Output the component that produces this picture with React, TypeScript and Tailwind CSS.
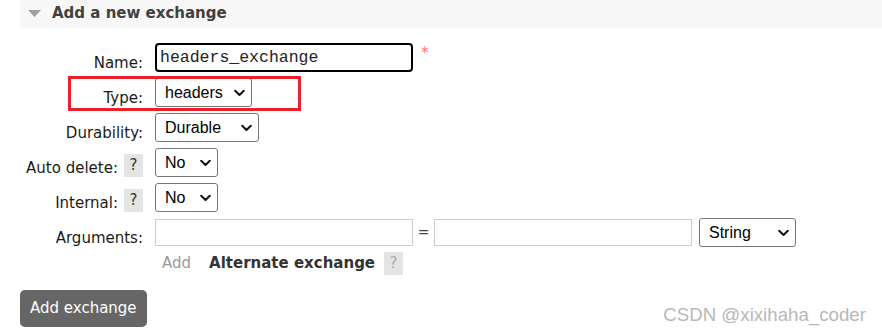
import React from "react";

const verdana = { fontFamily: '"DejaVu Sans", Verdana, sans-serif' };

function Chevron() {
  return (
    <svg width="11" height="7" viewBox="0 0 11 7" className="pointer-events-none absolute right-[7px] top-1/2 -translate-y-1/2">
      <path d="M1.2 1.2 5.5 5.5 9.8 1.2" fill="none" stroke="#111" strokeWidth="2" strokeLinecap="round" strokeLinejoin="round" />
    </svg>
  );
}

function Select({ value, options, width }: { value: string; options: string[]; width: string }) {
  return (
    <div className={`relative h-[29px] ${width}`}>
      <select
        defaultValue={value}
        className="h-full w-full appearance-none rounded-[3px] border border-[#767676] bg-white pl-[9px] text-[16px] text-black outline-none"
        style={{ fontFamily: '"Liberation Sans", Arial, sans-serif' }}
      >
        {options.map((o) => (
          <option key={o}>{o}</option>
        ))}
      </select>
      <Chevron />
    </div>
  );
}

function Help({ light }: { light?: boolean }) {
  return (
    <span
      className={`ml-[6px] inline-flex h-[23px] w-[19px] items-center justify-center bg-[#e4e4e4] text-[15px] leading-none ${
        light ? "text-[#aaa]" : "text-[#333]"
      }`}
    >
      ?
    </span>
  );
}

function Row({ label, help, children }: { label: string; help?: boolean; children: React.ReactNode }) {
  return (
    <div className="flex h-[35px] items-start">
      <div className="flex h-[29px] w-[123px] items-end justify-end">
        <span className="text-[15px] leading-[18px] text-[#1a1a1a]">{label}</span>
        {help && <Help />}
      </div>
      <div className="ml-[12px] flex items-center">{children}</div>
    </div>
  );
}

export default function App() {
  return (
    <div className="relative h-[333px] w-[882px] overflow-hidden bg-white" style={verdana}>
      <div className="pl-[20px]">
        {/* section header */}
        <div className="flex h-[28px] items-center bg-[#f7f7f7] pb-[2px]">
          <svg width="13" height="7" viewBox="0 0 13 7" className="ml-[8px]">
            <path d="M0 0h13L6.5 7z" fill="#a0a0a0" />
          </svg>
          <h2 className="ml-[11px] text-[15px] font-bold text-[#404040]">Add a new exchange</h2>
        </div>

        <div className="mt-[15px] flex flex-col">
          <Row label="Name:">
            <input
              defaultValue="headers_exchange"
              className="h-[29px] w-[258px] rounded-[4px] border-2 border-black px-[3px] text-[16.5px] text-[#222] outline-none"
              style={{ fontFamily: '"Liberation Mono", "Courier New", monospace' }}
            />
            <span className="ml-[8px] -mt-[8px] text-[15px] text-[#f77]">*</span>
          </Row>

          <div className="relative">
            <Row label="Type:">
              <Select value="headers" options={["direct", "fanout", "headers", "topic"]} width="w-[97px]" />
            </Row>
            {/* highlight annotation */}
            <div className="pointer-events-none absolute left-[48px] top-[-2px] h-[35px] w-[233px] border-[3px] border-[#e8212b]" />
          </div>

          <Row label="Durability:">
            <Select value="Durable" options={["Durable", "Transient"]} width="w-[104px]" />
          </Row>

          <Row label="Auto delete:" help>
            <Select value="No" options={["No", "Yes"]} width="w-[63px]" />
          </Row>

          <Row label="Internal:" help>
            <Select value="No" options={["No", "Yes"]} width="w-[63px]" />
          </Row>

          <Row label="Arguments:">
            <input className="h-[27px] w-[258px] border border-[#ccc] outline-none" />
            <span className="w-[21px] text-center text-[14px] text-[#444]">=</span>
            <input className="h-[27px] w-[258px] border border-[#ccc] outline-none" />
            <div className="ml-[7px]">
              <Select value="String" options={["String", "Number", "Boolean", "List"]} width="w-[97px]" />
            </div>
          </Row>

          <div className="-mt-[2px] flex items-center pl-[142px]">
            <span className="text-[15px] text-[#999]">Add</span>
            <span className="ml-[18px] text-[15px] font-bold text-[#333]">Alternate exchange</span>
            <span className="ml-[3px]">
              <Help light />
            </span>
          </div>
        </div>

        <button className="mt-[15px] h-[37px] rounded-[5px] bg-[#666] px-[10px] text-[15px] text-white">
          Add exchange
        </button>
      </div>

      <span
        className="absolute bottom-[4px] right-[16px] text-[18.7px] text-[#b8b8b8]"
        style={{ fontFamily: '"Liberation Sans", Arial, sans-serif' }}
      >
        CSDN @xixihaha_coder
      </span>
    </div>
  );
}
